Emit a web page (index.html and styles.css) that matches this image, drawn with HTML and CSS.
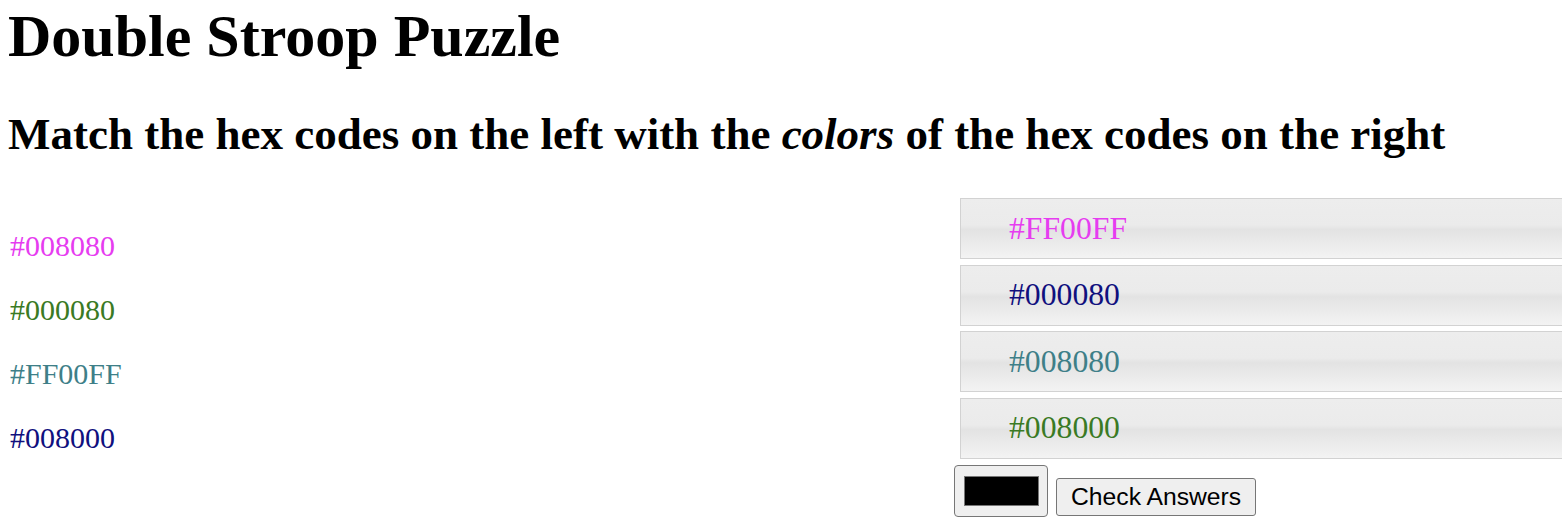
FILE: index.html
```html
<!DOCTYPE html>
<html lang="en">
<head>
<meta charset="utf-8">
<title>Double Stroop Puzzle</title>
<link rel="stylesheet" href="styles.css">
</head>
<body>
<h1 class="title">Double Stroop Puzzle</h1>
<h2 class="subtitle">Match the hex codes on the left with the <em>colors</em> of the hex codes on the right</h2>
<main class="puzzle">
  <ul class="left-list">
    <li class="c-magenta">#008080</li>
    <li class="c-green">#000080</li>
    <li class="c-teal">#FF00FF</li>
    <li class="c-navy">#008000</li>
  </ul>
  <div class="right-col">
    <ul class="right-list">
      <li><button class="hex-btn c-magenta">#FF00FF</button></li>
      <li><button class="hex-btn c-navy">#000080</button></li>
      <li><button class="hex-btn c-teal">#008080</button></li>
      <li><button class="hex-btn c-green">#008000</button></li>
    </ul>
    <div class="controls">
      <button class="color-btn" aria-label="Pick color"><span class="swatch"></span></button>
      <button class="check-btn">Check Answers</button>
    </div>
  </div>
</main>
</body>
</html>
```
FILE: styles.css
```css
html, body {
  margin: 0;
  padding: 0;
  background: #fff;
  overflow: hidden;
}
body {
  padding-left: 8px;
  font-family: "Liberation Serif", "Times New Roman", serif;
  color: #000;
}
.title {
  margin: 2px 0 0 0;
  font-size: 60px;
  font-weight: bold;
  line-height: normal;
}
.subtitle {
  margin: 37px 0 0 0;
  font-size: 45px;
  font-weight: bold;
  line-height: normal;
}
.subtitle em {
  font-style: italic;
}
.puzzle {
  margin-top: 38px;
  display: grid;
  grid-template-columns: 946px 800px;
  align-items: start;
}
.left-list {
  list-style: none;
  margin: 0;
  padding: 16px 0 0 2px;
}
.left-list li {
  font-size: 30px;
  line-height: 64px;
}
.right-list {
  list-style: none;
  margin: 0 0 0 6px;
  padding: 0;
  display: flex;
  flex-direction: column;
  gap: 5.67px;
}
.hex-btn {
  display: block;
  width: 720px;
  height: 61px;
  box-sizing: border-box;
  margin: 0;
  padding: 0 0 0 48px;
  text-align: left;
  font-family: "Liberation Serif", "Times New Roman", serif;
  font-size: 31.7px;
  border: 1px solid #d2d2d2;
  border-radius: 0;
  background: linear-gradient(to bottom, #ededed 0%, #ebebeb 44%, #e3e3e3 52%, #f3f3f3 100%);
}
.c-magenta { color: #e63cf0; }
.c-green { color: #3a7a24; }
.c-teal { color: #3e7f88; }
.c-navy { color: #10107e; }
.controls {
  margin-top: 6px;
  display: flex;
  align-items: flex-end;
  gap: 8px;
}
.color-btn {
  width: 94px;
  height: 52px;
  box-sizing: border-box;
  margin: 0;
  padding: 0;
  border: 1px solid #767676;
  border-radius: 4px;
  background: #efefef;
  display: flex;
  align-items: center;
  justify-content: center;
}
.swatch {
  display: block;
  width: 75px;
  height: 30px;
  box-sizing: border-box;
  background: #000;
  border: 1px solid #777;
}
.check-btn {
  height: 38px;
  margin: 0 0 1px 0;
  padding: 0 14px;
  box-sizing: border-box;
  font-family: "Liberation Sans", Arial, sans-serif;
  font-size: 24.7px;
  color: #000;
  border: 1px solid #767676;
  border-radius: 3px;
  background: #efefef;
}
```
